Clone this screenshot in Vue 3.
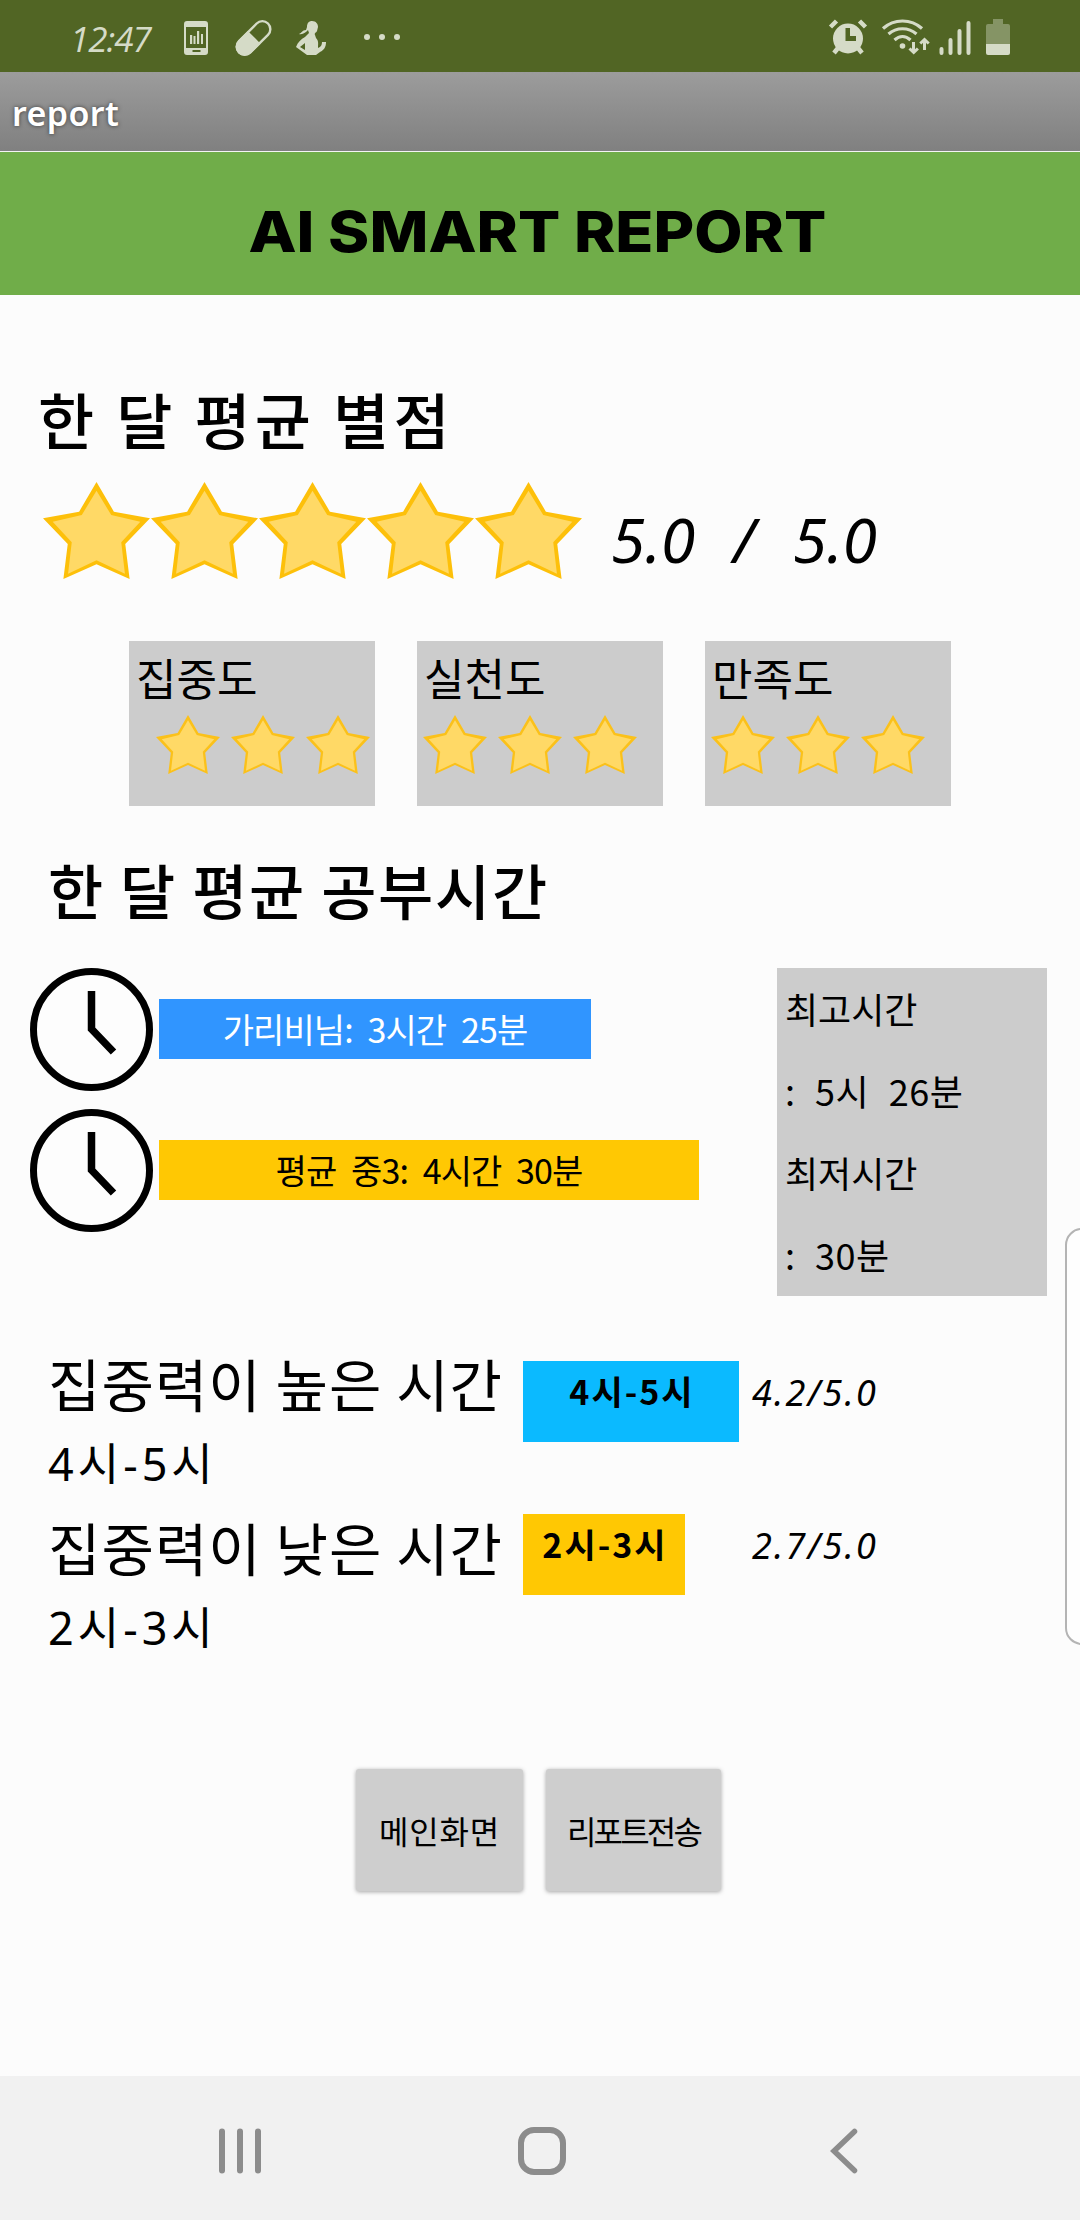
<script setup>
const starOuter = '160,0 212,89 320,109 246,186 259,291 160,247 61,291 74,186 0,109 108,89'
const starInner = '160,26 204,99 291,119 234,181 245,275 160,235 75,275 86,181 29,119 116,99'

const cards = [
  { label: '집중도', shifted: true },
  { label: '실천도', shifted: false },
  { label: '만족도', shifted: false },
]
const times = [
  { text: '가리비님: 3시간 25분', kind: 'mine', width: 432 },
  { text: '평균 중3: 4시간 30분', kind: 'average', width: 540 },
]
const focus = [
  { range: '4시-5시', score: '4.2/5.0', kind: 'high', width: 216 },
  { range: '2시-3시', score: '2.7/5.0', kind: 'low', width: 162 },
]
</script>

<template>
  <div class="screen">
    <div class="status">
      <span class="clock-text">12:47</span>
      <svg class="left-icons" width="230" height="72" viewBox="180 0 230 72">
        <path fill-rule="evenodd" d="M187 21h18a3 3 0 0 1 3 3v28a3 3 0 0 1-3 3h-18a3 3 0 0 1-3-3V24a3 3 0 0 1 3-3zM186 27v21h20V27zM192.500 50v2h8v-2z" />
        <path d="M190 35h2.200v9H190zM193.500 36h2v8h-2zM197 31h2.200v13H197zM201 34h2v10h-2z" />
        <g transform="rotate(45 253.500 38)">
          <rect x="245.500" y="17.500" width="16" height="41" rx="8" fill="none" stroke="#d5dbc7" stroke-width="2.400" />
          <path d="M244.500 37h18v13.500a9 9 0 0 1-18 0z" />
        </g>
        <path d="M312 21c4 0 6 3 6 6l-1 4c-1 2-3 2-2 4l1 3c3 3 2 6 2 10 3-1 4-3 4-6h4c0 5-2 8-6 10l-4 3h-9l-11-8c2-5 5-8 9-10l4-4-1-3c-2 2-5 5-9 4 3-1 3-4 7-4l1-3c0-4 2-6 5-6zM305 43l-5 4 5 3z" fill-rule="evenodd" />
        <circle cx="367" cy="37" r="3" /><circle cx="382" cy="37" r="3" /><circle cx="397" cy="37" r="3" />
      </svg>
      <svg class="right-icons" width="190" height="72" viewBox="825 0 190 72">
        <circle cx="848" cy="38.500" r="15" />
        <path class="line" d="M830.500 27l6-6M859.500 21l6 6M838 48l-4 5M858 48l4 5" stroke-width="4.500" />
        <path d="M845.500 28h4.500v8h6v5h-10.500z" fill="#516524" />
        <path class="line" stroke-width="3.200" d="M883 28.500c11-10 28-10 39 0M888.500 34c8-7 20-7 28 0M894.500 40c5-4.500 11-4.500 16 0" />
        <circle cx="902.500" cy="46" r="2.800" />
        <path class="line" stroke-width="3" d="M913.500 42v10M909.500 48.500l4.200 4 4.200-4M924.500 50V40M920.300 43.500l4.200-4 4.200 4" />
        <path class="line" stroke-width="4" stroke-linecap="round" d="M941.500 49v4M950.500 40v13M959.500 31v22M968.500 23v30" />
        <path d="M993 19h10v5h5a2 2 0 0 1 2 2v18h-24V26a2 2 0 0 1 2-2h5z" opacity=".4" />
        <path d="M986 44h24v9a2 2 0 0 1-2 2h-20a2 2 0 0 1-2-2z" />
      </svg>
    </div>
    <div class="app-title">report</div>
    <header class="banner"><span>AI SMART REPORT</span></header>

    <main>
      <h2>한 달 평균 별점</h2>
      <div class="rating">
        <svg v-for="n in 5" :key="n" class="big-star" viewBox="0 0 320 291" preserveAspectRatio="none">
          <polygon :points="starOuter" fill="#fdc00a" /><polygon :points="starInner" fill="#ffd966" />
        </svg>
        <span class="total"><span>5.0</span><span>/</span><span>5.0</span></span>
      </div>

      <section class="cards">
        <div v-for="c in cards" :key="c.label" class="card">
          <p>{{ c.label }}</p>
          <div class="card-stars" :class="{ shifted: c.shifted }">
            <svg v-for="n in 3" :key="n" viewBox="0 0 320 291" preserveAspectRatio="none">
              <polygon :points="starOuter" fill="#fbc11a" /><polygon :points="starInner" fill="#ffd966" />
            </svg>
          </div>
        </div>
      </section>

      <h2 class="study">한 달 평균 공부시간</h2>
      <section class="times">
        <div class="bars">
          <div v-for="t in times" :key="t.kind" class="bar-row">
            <svg width="123" height="123" viewBox="0 0 123 123">
              <circle cx="61.500" cy="61.500" r="58" fill="#fdfdfd" stroke="#000" stroke-width="7" />
              <path d="M61.500 23v38l22 23" fill="none" stroke="#000" stroke-width="7.500" />
            </svg>
            <div class="bar" :class="t.kind" :style="{ width: t.width + 'px' }"><span>{{ t.text }}</span></div>
          </div>
        </div>
        <div class="extremes">
          <p>최고시간</p>
          <p class="value">: 5시 26분</p>
          <p>최저시간</p>
          <p class="value">: 30분</p>
        </div>
      </section>

      <section class="focus">
        <div class="focus-text">
          <p class="lead">집중력이 높은 시간</p>
          <p class="hours">4시-5시</p>
          <p class="lead">집중력이 낮은 시간</p>
          <p class="hours">2시-3시</p>
        </div>
        <div class="focus-bars">
          <div v-for="f in focus" :key="f.kind" class="focus-row">
            <div class="slot"><div class="badge" :class="f.kind" :style="{ width: f.width + 'px' }">{{ f.range }}</div></div>
            <span class="score">{{ f.score }}</span>
          </div>
        </div>
      </section>

      <div class="buttons">
        <button class="home">메인화면</button>
        <button class="send">리포트전송</button>
      </div>
    </main>

    <nav>
      <svg width="1080" height="144" viewBox="0 2076 1080 144" fill="none" stroke="#8c8c8c" stroke-width="6" stroke-linecap="round">
        <path d="M222 2131.500v39M240 2131.500v39M258 2131.500v39" />
        <rect x="521" y="2130" width="42" height="42" rx="13" />
        <path d="M854.500 2131.500l-20.500 19.500 20.500 19.500" stroke-width="5.500" />
      </svg>
    </nav>
    <div class="edge-panel"></div>
  </div>
</template>

<style>
body { margin: 0; background: #fcfcfc; }
</style>

<style scoped>
.screen {
  position: relative;
  width: 1080px;
  height: 2220px;
  display: flex;
  flex-direction: column;
  overflow: hidden;
  background: #fcfcfc;
  color: #000;
  font-family: "Noto Sans CJK KR", sans-serif;
}
p, h2 { margin: 0; white-space: nowrap; }
svg { display: block; flex: none; }
.status { flex: none; display: flex; height: 72px; background: #516524; color: #d5dbc7; }
.status svg { fill: #d5dbc7; }
.line { fill: none; stroke: #d5dbc7; }
.clock-text { width: 110px; padding-left: 70px; font: italic 400 35px/77px "Open Sans", sans-serif; letter-spacing: -1px; }
.right-icons { margin-left: 415px; }
.app-title {
  flex: none;
  height: 79px;
  padding-left: 12px;
  border-bottom: 1px solid #f4f4f4;
  background: linear-gradient(#9c9c9c, #808080);
  color: #fff;
  font: 600 34px/82px "Noto Sans", sans-serif;
  letter-spacing: .4px;
  text-shadow: 0 0 4px rgba(0, 0, 0, .6);
}
.banner { flex: none; display: flex; justify-content: center; height: 143px; background: #70ad49; }
.banner span { margin-right: 6px; font: 800 57px/160px Inter, sans-serif; transform: scaleX(1.097); }
main { flex: none; height: 1781px; display: flex; flex-direction: column; }
h2 { margin: 84px 0 0 38px; height: 80px; font-size: 61px; line-height: 80px; font-weight: 500; letter-spacing: 4.2px; }
.rating { display: flex; height: 97px; margin: 23px 0 0 43px; }
.big-star { width: 107px; height: 97px; margin-right: 1px; }
.total { display: flex; justify-content: space-between; width: 266px; margin-left: 28px; font: italic 400 62px/115px "Noto Sans", sans-serif; }
.cards { display: flex; gap: 42px; margin: 62px 0 0 129px; }
.card { width: 246px; height: 165px; background: #ccc; }
.card p { margin-left: 7px; height: 74px; font-size: 44px; line-height: 73px; }
.card-stars { display: flex; gap: 11px; margin-left: 6px; }
.card-stars.shifted { margin-left: 27px; }
.card-stars svg { width: 64px; height: 59px; }
.study { margin: 43px 0 0 48px; font-size: 60px; letter-spacing: 1.7px; }
.times { display: flex; justify-content: space-between; height: 328px; margin: 39px 33px 0 30px; }
.bars { display: flex; flex-direction: column; gap: 18px; }
.bar-row { display: flex; align-items: center; gap: 6px; }
.bar { display: flex; justify-content: center; height: 60px; margin-bottom: 1px; font-size: 34px; line-height: 60px; letter-spacing: -.9px; word-spacing: 8px; white-space: nowrap; }
.mine { background: #3095ff; color: #fff; }
.average { background: #ffc803; }
.extremes { width: 262px; padding-left: 8px; background: #ccc; }
.extremes p { height: 82px; font-size: 36px; line-height: 80px; }
.extremes .value { letter-spacing: .5px; word-spacing: 11px; }
.focus { display: flex; margin-top: 45px; }
.focus-text { width: 475px; padding-left: 48px; }
.focus-text p { height: 82px; line-height: 82px; }
.lead { font-size: 57px; letter-spacing: 1px; }
.hours { font-size: 45px; font-family: "Noto Sans", "Noto Sans CJK KR", sans-serif; letter-spacing: 4px; }
.focus-bars { display: flex; flex-direction: column; gap: 72px; padding-top: 20px; }
.focus-row { display: flex; height: 81px; }
.slot { width: 228px; }
.badge { height: 81px; font-size: 34px; line-height: 59px; font-weight: 700; letter-spacing: 2px; text-indent: 2px; text-align: center; white-space: nowrap; }
.high { background: #0bbaff; }
.low { background: #ffc803; }
.score { padding-left: 1px; font: italic 400 36px/64px "Noto Sans", sans-serif; letter-spacing: 2.200px; }
.buttons { display: flex; gap: 23px; margin: 100px 0 0 356px; }
button {
  height: 122px;
  padding: 0;
  border: 0;
  border-radius: 3px;
  background: #cecece;
  color: #000;
  box-shadow: 0 1px 4px rgba(0, 0, 0, .35);
  font: 400 32px/118px "Noto Sans CJK KR", sans-serif;
  white-space: nowrap;
}
.home { width: 167px; letter-spacing: .8px; }
.send { width: 175px; letter-spacing: -2.800px; }
nav { flex: none; height: 144px; background: #f1f1f1; }
.edge-panel {
  position: absolute;
  left: 1065px;
  top: 1228px;
  width: 30px;
  height: 413px;
  border: 2px solid #b4b4b4;
  border-radius: 20px;
  background: #fefefe;
}
</style>
